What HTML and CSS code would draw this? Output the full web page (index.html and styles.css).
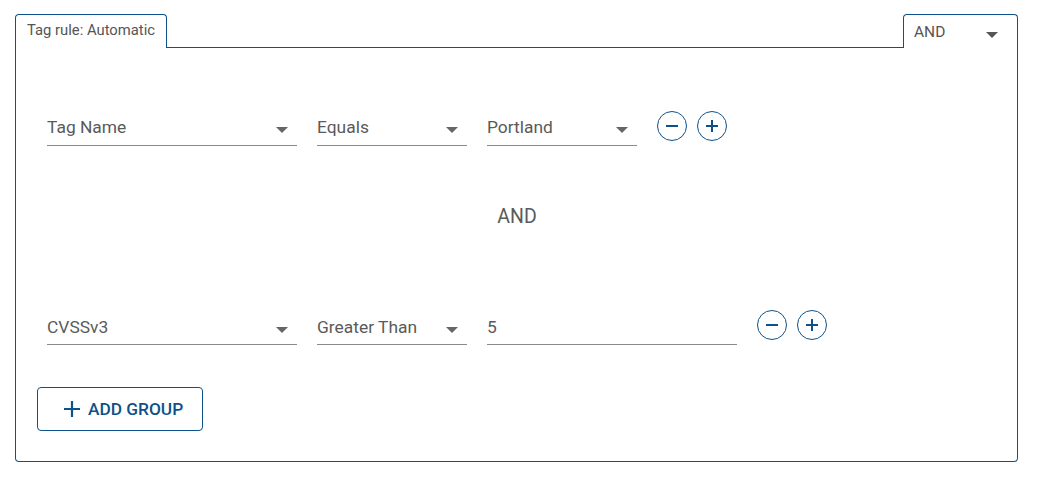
FILE: index.html
```html
<!DOCTYPE html>
<html>
<head>
<meta charset="utf-8">
<link rel="stylesheet" href="styles.css">
</head>
<body>
<div class="page">
  <div class="header">
    <div class="tab">Tag rule: Automatic</div>
    <div class="filler"></div>
    <div class="op-select">
      <span>AND</span>
      <svg class="caret" width="12" height="6" viewBox="0 0 12 6"><path d="M0 0h12L6 6z" fill="#555"/></svg>
    </div>
  </div>
  <div class="body">
    <div class="row">
      <div class="field w250"><span>Tag Name</span><svg class="caret" width="12" height="6" viewBox="0 0 12 6"><path d="M0 0h12L6 6z" fill="#666"/></svg></div>
      <div class="field w150"><span>Equals</span><svg class="caret" width="12" height="6" viewBox="0 0 12 6"><path d="M0 0h12L6 6z" fill="#666"/></svg></div>
      <div class="field w150"><span>Portland</span><svg class="caret" width="12" height="6" viewBox="0 0 12 6"><path d="M0 0h12L6 6z" fill="#666"/></svg></div>
      <div class="actions">
        <button class="circle"><svg width="14" height="14" viewBox="0 0 14 14"><path d="M1 7h12" stroke="#0e5189" stroke-width="2"/></svg></button>
        <button class="circle"><svg width="14" height="14" viewBox="0 0 14 14"><path d="M1 7h12M7 1v12" stroke="#0e5189" stroke-width="2"/></svg></button>
      </div>
    </div>
    <div class="joiner">AND</div>
    <div class="row">
      <div class="field w250"><span>CVSSv3</span><svg class="caret" width="12" height="6" viewBox="0 0 12 6"><path d="M0 0h12L6 6z" fill="#666"/></svg></div>
      <div class="field w150"><span>Greater Than</span><svg class="caret" width="12" height="6" viewBox="0 0 12 6"><path d="M0 0h12L6 6z" fill="#666"/></svg></div>
      <div class="field w250"><span>5</span></div>
      <div class="actions">
        <button class="circle"><svg width="14" height="14" viewBox="0 0 14 14"><path d="M1 7h12" stroke="#0e5189" stroke-width="2"/></svg></button>
        <button class="circle"><svg width="14" height="14" viewBox="0 0 14 14"><path d="M1 7h12M7 1v12" stroke="#0e5189" stroke-width="2"/></svg></button>
      </div>
    </div>
    <button class="add-group"><svg width="18" height="18" viewBox="0 0 18 18"><path d="M1 9h16M9 1v16" stroke="#0e5189" stroke-width="2.2"/></svg><span>ADD GROUP</span></button>
  </div>
</div>
</body>
</html>
```
FILE: styles.css
```css
* { box-sizing: border-box; }
body {
  margin: 0;
  background: #fff;
  font-family: Roboto, "Liberation Sans", sans-serif;
  color: #5a5a5a;
}
.page {
  padding: 14px 19px 0 15px;
}
.header {
  display: flex;
  height: 34px;
}
.tab {
  width: 152px;
  border: 1px solid #0e5189;
  border-bottom: none;
  border-radius: 4px 4px 0 0;
  font-size: 14.8px;
  color: #555;
  padding: 6px 0 0 11px;
  line-height: 18px;
}
.filler {
  flex: 1;
  border-bottom: 1px solid #0e5189;
}
.op-select {
  width: 115px;
  border: 1px solid #0e5189;
  border-bottom: none;
  border-radius: 4px 4px 0 0;
  display: flex;
  align-items: center;
  justify-content: space-between;
  padding: 1px 19px 0 10px;
  font-size: 15.5px;
  color: #555;
}
.body {
  border: 1px solid #0e5189;
  border-top: none;
  border-radius: 0 0 4px 4px;
  padding: 65px 20px 30px 21px;
}
.row {
  display: flex;
  align-items: flex-start;
  padding-left: 10px;
  gap: 20px;
}
.field {
  height: 33px;
  border-bottom: 1px solid #8a8a8a;
  display: flex;
  align-items: center;
  justify-content: space-between;
  padding: 0 9px 4px 0;
  font-size: 17.4px;
  color: #5a5a5a;
}
.row + .joiner + .row .field { padding-bottom: 2px; }
.w250 { width: 250px; }
.w150 { width: 150px; }
.caret { margin-top: 6px; }
.actions {
  display: flex;
  gap: 10px;
  margin-top: -2px;
}
.circle {
  width: 30px;
  height: 30px;
  border: 1px solid #0e5189;
  border-radius: 50%;
  background: #fff;
  padding: 0;
  display: flex;
  align-items: center;
  justify-content: center;
}
.joiner {
  height: 166px;
  padding-top: 61px;
  line-height: 20px;
  text-align: center;
  font-size: 19.5px;
  color: #5a5a5a;
}
.add-group {
  margin-top: 42px;
  width: 166px;
  height: 44px;
  border: 1px solid #0e5189;
  border-radius: 4px;
  background: #fff;
  display: flex;
  align-items: center;
  padding: 0 0 0 25px;
  gap: 7px;
  font-family: Roboto, "Liberation Sans", sans-serif;
  font-weight: 500;
  font-size: 17.3px;
  color: #0e5189;
}
```
